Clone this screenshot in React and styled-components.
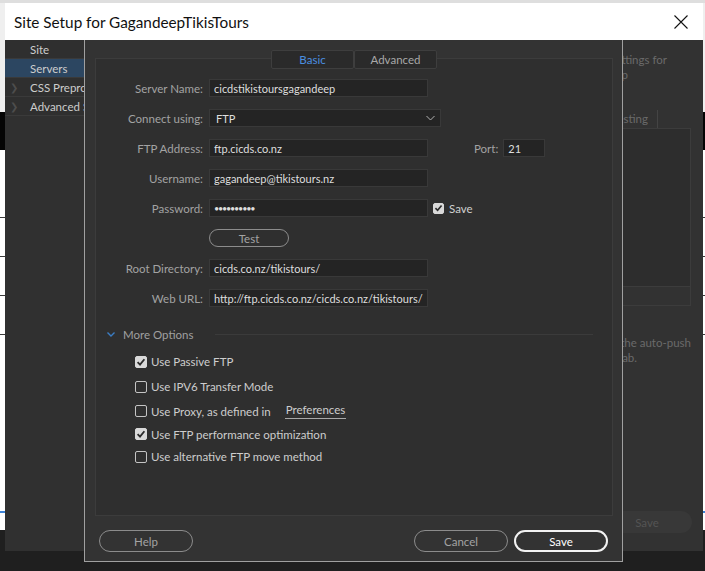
import React from 'react';
import styled, { createGlobalStyle } from 'styled-components';

const GlobalStyle = createGlobalStyle`
  html, body {
    margin: 0;
    padding: 0;
  }
  body {
    width: 705px;
    height: 571px;
    overflow: hidden;
    font-family: Lato, "Liberation Sans", sans-serif;
  }
`;

const Desktop = styled.div`
  position: relative;
  width: 705px;
  height: 571px;
  overflow: hidden;
  display: flex;
  flex-direction: column;
  background: #fff;
`;

// the app behind the dialogs, only its edges show
const AppTop = styled.div`
  height: 112px;
  background: #efefef;
  border-top: 3px solid #dedede;
  box-sizing: border-box;
`;
const AppNav = styled.div`
  height: 38px;
  background: #050505;
`;
const AppRow = styled.div`
  height: ${p => p.$h}px;
  background: #fff;
  border-bottom: 1px solid #3a3a3a;
  box-sizing: border-box;
`;
const AppFill = styled.div`
  flex: 1;
  background: #fff;
`;
const AppBlue = styled.div`
  height: 2px;
  background: #3d83d6;
`;
const AppGap = styled.div`
  height: 17px;
  background: #fff;
`;
const AppFooter = styled.div`
  height: 41px;
  background: #1f1f1f;
`;

const SetupWindow = styled.div`
  position: absolute;
  left: 5px;
  top: 3px;
  width: 698px;
  height: 548px;
  display: flex;
  flex-direction: column;
  background: #323232;
`;

const TitleBar = styled.div`
  height: 37px;
  flex-shrink: 0;
  background: #fff;
  display: flex;
  align-items: center;
  justify-content: space-between;
  padding: 0 15px 0 9px;
  font-size: 15.3px;
  color: #111;
`;

const SetupBody = styled.div`
  flex: 1;
  display: flex;
  min-height: 0;
`;

const Sidebar = styled.div`
  width: 180px;
  flex-shrink: 0;
  background: #303030;
  border-right: 1px solid #262626;
`;

const SideItem = styled.div`
  height: 19px;
  display: flex;
  align-items: center;
  gap: 12px;
  padding-left: 5px;
  font-size: 11.5px;
  color: #cdcdcd;
  background: ${p => (p.$active ? '#2c4661' : '#2f2f2f')};
  border-bottom: 1px solid #3a3a3a;
  box-sizing: border-box;
`;

const Caret = styled.span`
  width: 8px;
  font-size: 10px;
  color: ${p => (p.$show ? '#4d4d4d' : 'transparent')};
`;

const SetupMain = styled.div`
  flex: 1;
  display: flex;
  flex-direction: column;
  padding: 12px 11px 18px 0;
  font-size: 11.5px;
  color: #6a6a6a;
`;

const DimLine = styled.div`
  height: 15px;
  line-height: 15px;
  white-space: nowrap;
  text-align: right;
  padding-right: ${p => p.$end}px;
`;

const ServerTabs = styled.div`
  margin-top: 28px;
  height: 18px;
  display: flex;
  justify-content: flex-end;
  padding-right: 34px;
`;

const ServerTab = styled.div`
  padding: 0 9px;
  line-height: 18px;
  border-right: 1px solid #444;
  color: #6a6a6a;
`;

const ServerTable = styled.div`
  height: 176px;
  margin-right: 1px;
  border: 1px solid #3c3c3c;
  display: flex;
  flex-direction: column;
`;

const ServerList = styled.div`
  flex: 1;
  background: #2d2d2d;
  border-bottom: 1px solid #3c3c3c;
`;

const ServerTools = styled.div`
  height: 18px;
`;

const NoteBlock = styled.div`
  margin-top: 29px;
`;

const GhostButton = styled.div`
  margin-top: auto;
  align-self: flex-end;
  width: 90px;
  height: 22px;
  border-radius: 11px;
  background: #383838;
  color: #545454;
  display: flex;
  align-items: center;
  justify-content: center;
`;

// Server dialog on top
const ServerDialog = styled.div`
  position: absolute;
  left: 84px;
  top: 40px;
  width: 539px;
  height: 522px;
  box-sizing: border-box;
  background: #333333;
  border: 1px solid #a0a0a0;
  border-top: none;
  padding: 10px 9px 0 10px;
  display: flex;
  flex-direction: column;
  font-size: 11.5px;
`;

const TabGroup = styled.div`
  display: flex;
  justify-content: center;
  position: relative;
  z-index: 1;
  margin-bottom: -11px;
`;

const Tab = styled.div`
  width: 83px;
  height: 19px;
  box-sizing: border-box;
  display: flex;
  align-items: center;
  justify-content: center;
  background: #2a2a2a;
  border: 1px solid #3e3e3e;
  border-radius: 2px;
  color: ${p => (p.$active ? '#4a8fe0' : '#a8a8a8')};
`;

const Panel = styled.div`
  flex: 1;
  border: 1px solid #3c3c3c;
  background: #2f2f2f;
  padding: 20px 0 0 0;
  display: flex;
  flex-direction: column;
`;

const Form = styled.div`
  display: flex;
  flex-direction: column;
  gap: 12px;
`;

const Row = styled.div`
  height: 18px;
  display: flex;
  align-items: center;
`;

const Label = styled.label`
  width: 107px;
  margin-right: 6px;
  flex-shrink: 0;
  text-align: right;
  color: #a3a3a3;
  white-space: nowrap;
`;

const Field = styled.input`
  width: ${p => p.$w || 219}px;
  height: 18px;
  box-sizing: border-box;
  padding: 0 4px;
  background: #242424;
  border: 1px solid #393939;
  color: #dedede;
  font-family: Lato, "Liberation Sans", sans-serif;
  font-size: ${p => (p.type === 'password' ? '9px' : '11px')};
  letter-spacing: ${p => (p.type === 'password' ? '-1.2px' : '0')};
  outline: none;
`;

const SelectBox = styled.div`
  width: 232px;
  height: 18px;
  box-sizing: border-box;
  padding: 0 5px 0 6px;
  background: #242424;
  border: 1px solid #393939;
  color: #dedede;
  font-size: 11px;
  display: flex;
  align-items: center;
  justify-content: space-between;
`;

const PortLabel = styled.span`
  margin: 0 5px 0 46px;
  color: #a3a3a3;
`;

const InlineCheck = styled.label`
  margin-left: 5px;
  display: flex;
  align-items: center;
  gap: 5px;
  color: #cfcfcf;
`;

const Box = styled.span`
  width: ${p => p.$size || 12}px;
  height: ${p => p.$size || 12}px;
  box-sizing: border-box;
  border-radius: 2px;
  flex-shrink: 0;
  display: flex;
  align-items: center;
  justify-content: center;
  background: ${p => (p.$checked ? '#d9d9d9' : 'transparent')};
  border: 1px solid ${p => (p.$checked ? '#d9d9d9' : '#c4c4c4')};
`;

const PillButton = styled.button`
  width: ${p => p.$w || 94}px;
  height: ${p => p.$h || 22}px;
  box-sizing: border-box;
  border-radius: 12px;
  background: transparent;
  border: ${p => (p.$primary ? '2px solid #f2f2f2' : '1px solid #8c8c8c')};
  color: ${p => (p.$primary ? '#ffffff' : '#a3a3a3')};
  font: 11.5px Lato, "Liberation Sans", sans-serif;
  padding: 0;
`;

const MoreRow = styled.div`
  margin-top: 20px;
  height: 14px;
  display: flex;
  align-items: center;
  padding: 0 19px 0 11px;
  color: #a0a0a0;
  gap: 8px;
`;

const Rule = styled.div`
  flex: 1;
  height: 1px;
  margin-left: 14px;
  background: #3b3b3b;
`;

const CheckList = styled.div`
  margin-top: 8px;
  padding-left: 39px;
  display: flex;
  flex-direction: column;
`;

const CheckRow = styled.div`
  height: ${p => p.$h}px;
  display: flex;
  align-items: center;
  gap: 4px;
  color: #cdcdcd;
`;

const PrefLink = styled.span`
  margin-left: 10px;
  padding: 0 1px 1px;
  border-bottom: 1px solid #a8a8a8;
  line-height: 14px;
`;

const Footer = styled.div`
  height: 45px;
  flex-shrink: 0;
  display: flex;
  align-items: flex-start;
  gap: 6px;
  padding: 14px 5px 0 4px;
  box-sizing: border-box;
`;

const Spacer = styled.div`
  flex: 1;
`;

const Check = () => (
  <svg width="10" height="10" viewBox="0 0 10 10">
    <path d="M1.6 5.2 L4 7.6 L8.4 2.2" fill="none" stroke="#2b2b2b" strokeWidth="1.8" />
  </svg>
);

const CheckItem = ({ checked, h, children }) => (
  <CheckRow $h={h}>
    <Box $checked={checked}>{checked && <Check />}</Box>
    {children}
  </CheckRow>
);

export default function App() {
  return (
    <Desktop>
      <GlobalStyle />
      <AppTop />
      <AppNav />
      <AppRow $h={68} />
      <AppRow $h={39} />
      <AppRow $h={39} />
      <AppRow $h={39} />
      <AppFill />
      <AppBlue />
      <AppGap />
      <AppFooter />

      <SetupWindow>
        <TitleBar>
          <span>Site Setup for GagandeepTikisTours</span>
          <svg width="14" height="14" viewBox="0 0 14 14">
            <path d="M0.5 0.5 L13.5 13.5 M13.5 0.5 L0.5 13.5" stroke="#111" strokeWidth="1.1" />
          </svg>
        </TitleBar>
        <SetupBody>
          <Sidebar>
            <SideItem><Caret />Site</SideItem>
            <SideItem $active><Caret />Servers</SideItem>
            <SideItem><Caret $show>&#x276F;</Caret>CSS Preprocessors</SideItem>
            <SideItem><Caret $show>&#x276F;</Caret>Advanced Settings</SideItem>
          </Sidebar>
          <SetupMain>
            <DimLine $end={25}>The settings for</DimLine>
            <DimLine $end={64}>connection setup</DimLine>
            <ServerTabs>
              <ServerTab>Remote</ServerTab>
              <ServerTab>Testing</ServerTab>
            </ServerTabs>
            <ServerTable>
              <ServerList />
              <ServerTools />
            </ServerTable>
            <NoteBlock>
              <DimLine $end={1}>the auto-push</DimLine>
              <DimLine $end={55}>Advanced tab.</DimLine>
            </NoteBlock>
            <GhostButton>Save</GhostButton>
          </SetupMain>
        </SetupBody>
      </SetupWindow>

      <ServerDialog>
        <TabGroup>
          <Tab $active>Basic</Tab>
          <Tab>Advanced</Tab>
        </TabGroup>
        <Panel>
          <Form>
            <Row>
              <Label>Server Name:</Label>
              <Field readOnly value="cicdstikistoursgagandeep" />
            </Row>
            <Row>
              <Label>Connect using:</Label>
              <SelectBox>
                <span>FTP</span>
                <svg width="9" height="6" viewBox="0 0 9 6">
                  <path d="M0.5 1 L4.5 5 L8.5 1" fill="none" stroke="#b0b0b0" strokeWidth="1" />
                </svg>
              </SelectBox>
            </Row>
            <Row>
              <Label>FTP Address:</Label>
              <Field readOnly value="ftp.cicds.co.nz" />
              <PortLabel>Port:</PortLabel>
              <Field readOnly value="21" $w={42} />
            </Row>
            <Row>
              <Label>Username:</Label>
              <Field readOnly value="gagandeep@tikistours.nz" />
            </Row>
            <Row>
              <Label>Password:</Label>
              <Field readOnly type="password" value="xxxxxxxxxx" />
              <InlineCheck>
                <Box $checked $size={11}><Check /></Box>
                Save
              </InlineCheck>
            </Row>
            <Row>
              <Label />
              <PillButton $w={80} $h={18}>Test</PillButton>
            </Row>
            <Row>
              <Label>Root Directory:</Label>
              <Field readOnly value="cicds.co.nz/tikistours/" />
            </Row>
            <Row>
              <Label>Web URL:</Label>
              <Field readOnly value="http://ftp.cicds.co.nz/cicds.co.nz/tikistours/" />
            </Row>
          </Form>

          <MoreRow>
            <svg width="8" height="5" viewBox="0 0 8 5">
              <path d="M0.5 0.5 L4 4 L7.5 0.5" fill="none" stroke="#3b7dc4" strokeWidth="1.4" />
            </svg>
            <span>More Options</span>
            <Rule />
          </MoreRow>

          <CheckList>
            <CheckItem checked h={25}>Use Passive FTP</CheckItem>
            <CheckItem h={25}>Use IPV6 Transfer Mode</CheckItem>
            <CheckItem h={24}>
              Use Proxy, as defined in <PrefLink>Preferences</PrefLink>
            </CheckItem>
            <CheckItem checked h={22}>Use FTP performance optimization</CheckItem>
            <CheckItem h={23}>Use alternative FTP move method</CheckItem>
          </CheckList>
        </Panel>
        <Footer>
          <PillButton>Help</PillButton>
          <Spacer />
          <PillButton>Cancel</PillButton>
          <PillButton $primary>Save</PillButton>
        </Footer>
      </ServerDialog>
    </Desktop>
  );
}
